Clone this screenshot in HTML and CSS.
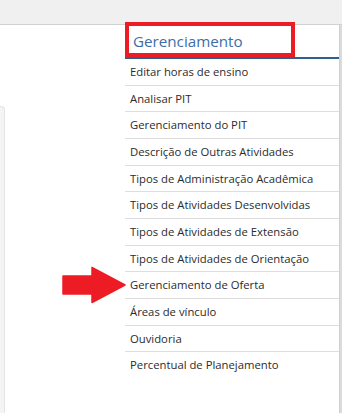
FILE: index.html
```html
<!DOCTYPE html>
<html>
<head>
    <link rel="stylesheet" href="styles.css">
</head>
<body>
    <div class="topbar"></div>

    <div class="main">
        <div class="side-panel"></div>

        <div class="menu">
            <div class="menu-title">Gerenciamento</div>
            <ul class="menu-list">
                <li>Editar horas de ensino</li>
                <li>Analisar PIT</li>
                <li>Gerenciamento do PIT</li>
                <li>Descrição de Outras Atividades</li>
                <li>Tipos de Administração Acadêmica</li>
                <li>Tipos de Atividades Desenvolvidas</li>
                <li>Tipos de Atividades de Extensão</li>
                <li>Tipos de Atividades de Orientação</li>
                <li>Gerenciamento de Oferta</li>
                <li>Áreas de vínculo</li>
                <li>Ouvidoria</li>
                <li>Percentual de Planejamento</li>
            </ul>
        </div>

        <div class="scroll-edge"></div>

        <!-- annotations drawn over the screenshot -->
        <div class="mark-box"></div>
        <svg class="mark-arrow" width="64" height="38" viewBox="0 0 64 38">
            <polygon points="1,10 30,10 30,1.5 63,19 30,36.5 30,28 1,28" fill="#ed1c24" stroke="#ed1c24" stroke-width="1.5" stroke-linejoin="round"/>
        </svg>
    </div>
</body>
</html>
```

FILE: styles.css
```css
body {
    margin: 0;
    background: #fff;
    font-family: 'Open Sans', 'Noto Sans', sans-serif;
    color: #333;
    height: 413px;
    overflow: hidden;
}
.topbar {
    height: 24px;
    background: #f0f0f0;
    border-bottom: 1px solid #d2d2d2;
}
.main {
    position: relative;
    display: flex;
    height: 388px;
}
.side-panel {
    width: 4px;
    margin-top: 81px;
    background: #f4f4f4;
    border: 1px solid #e4e4e4;
    border-left: none;
    border-bottom: none;
    border-top-right-radius: 4px;
}
.menu {
    margin-left: 120px;
    flex: 1;
}
.menu-title {
    height: 32px;
    line-height: 32px;
    padding-left: 8px;
    font-size: 15.2px;
    color: #3b6ea8;
    border-bottom: 2px solid #2f5f8f;
}
.menu-list {
    list-style: none;
    margin: 0;
    padding: 0;
}
.menu-list li {
    height: 25.67px;
    line-height: 25.67px;
    padding-left: 5px;
    font-size: 11.3px;
    color: #2b2b2b;
    border-bottom: 1px solid #dedede;
    white-space: nowrap;
}
.menu-list li:last-child {
    border-bottom: none;
}
.scroll-edge {
    width: 2px;
    background: #dcdcdc;
    border-left: 1px solid #cfcfcf;
}
.mark-box {
    position: absolute;
    left: 125px;
    top: -3px;
    width: 162px;
    height: 27px;
    border: 4px solid #ed1c24;
}
.mark-arrow {
    position: absolute;
    left: 62px;
    top: 241px;
}
```
